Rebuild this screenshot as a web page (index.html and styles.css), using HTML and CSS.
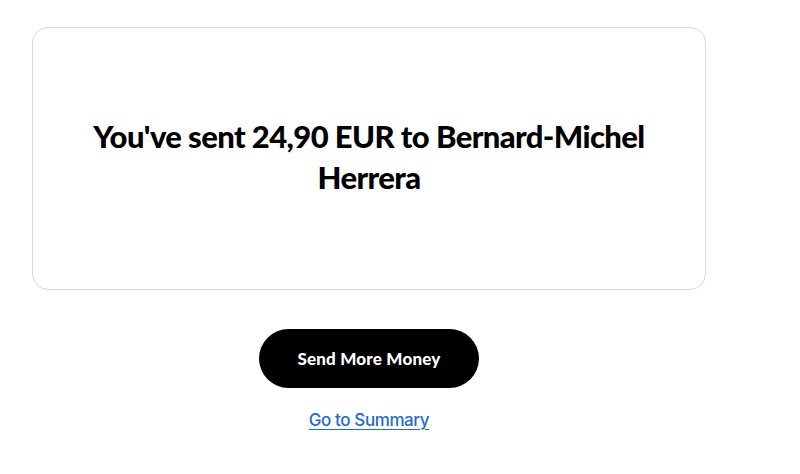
FILE: index.html
```html
<!DOCTYPE html>
<html lang="en">
<head>
<meta charset="utf-8">
<title>Transfer sent</title>
<link rel="stylesheet" href="styles.css">
</head>
<body>
<main class="page">
  <section class="card">
    <h1 class="title">You've sent 24,90 EUR to Bernard-Michel Herrera</h1>
  </section>
  <div class="actions">
    <button class="btn-primary" type="button">Send More Money</button>
    <a class="link" href="#">Go to Summary</a>
  </div>
</main>
</body>
</html>
```
FILE: styles.css
```css
html, body {
  margin: 0;
  padding: 0;
  background: #ffffff;
}
body {
  font-family: Inter, "Noto Sans", "Liberation Sans", sans-serif;
  color: #000;
}
.page {
  width: 674px;
  padding: 27px 0 0 32px;
  display: flex;
  flex-direction: column;
}
.card {
  box-sizing: border-box;
  height: 263px;
  border: 1px solid #d9d9d9;
  border-radius: 16px;
  display: flex;
  align-items: center;
  justify-content: center;
  padding: 0 50px 4px;
}
.title {
  margin: 0;
  text-align: center;
  font-family: Lato, "Noto Sans", sans-serif;
  font-size: 31px;
  line-height: 41px;
  font-weight: 900;
  letter-spacing: -0.6px;
}
.actions {
  display: flex;
  flex-direction: column;
  align-items: center;
  padding-top: 39px;
  gap: 22px;
}
.btn-primary {
  width: 220px;
  height: 59px;
  border: none;
  border-radius: 30px;
  background: #000;
  color: #fff;
  font-family: Lato, sans-serif;
  font-size: 17px;
  font-weight: 900;
  letter-spacing: 0.2px;
  cursor: pointer;
}
.link {
  color: #1f6bd0;
  font-size: 17px;
  font-weight: 500;
  letter-spacing: -0.4px;
  text-decoration: underline;
  text-underline-offset: 3px;
}
```
